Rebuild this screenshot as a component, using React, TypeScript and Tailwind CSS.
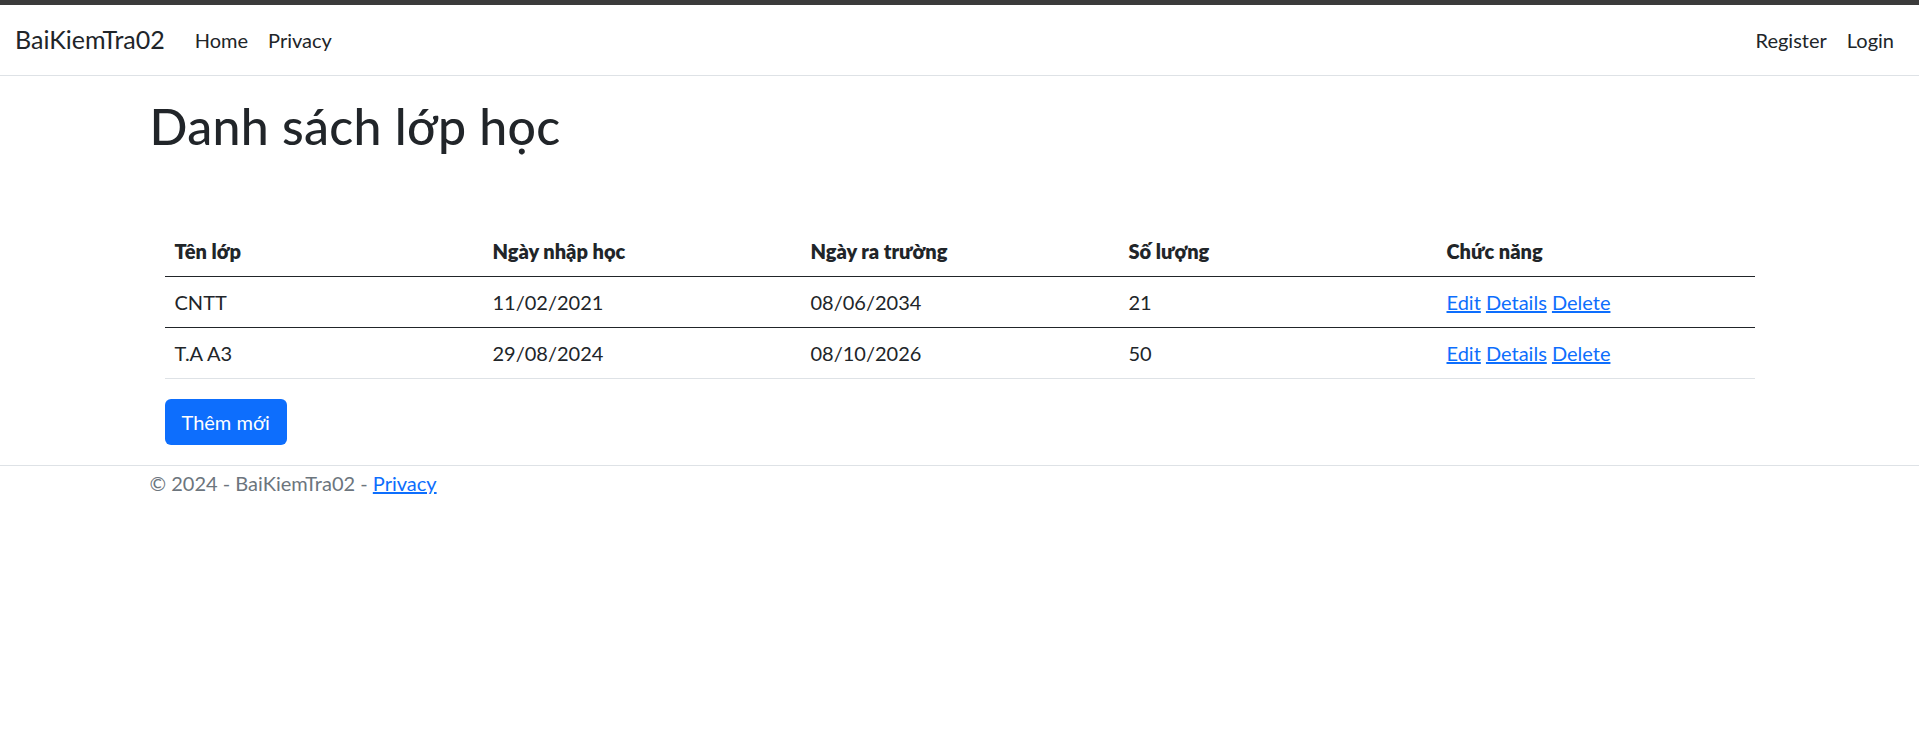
import React from 'react';

const rows = [
  { name: 'CNTT', start: '11/02/2021', end: '08/06/2034', count: 21 },
  { name: 'T.A A3', start: '29/08/2024', end: '08/10/2026', count: 50 },
];

const font = { fontFamily: 'Lato, "Noto Sans", sans-serif' };

const App = () => {
  return (
    <div className="min-h-[739px] bg-white text-[#212529] text-[20px]" style={font}>
      <div className="h-[5px] bg-[#3b3b3b]" />

      <nav className="h-[71px] flex items-center px-[15px] border-b border-[#dee2e6]">
        <a href="#" className="text-[25px] mr-[20px] text-[#212529]">BaiKiemTra02</a>
        <div className="flex flex-1">
          <a href="#" className="px-[10px] text-[#212529]">Home</a>
          <a href="#" className="px-[10px] text-[#212529]">Privacy</a>
        </div>
        <div className="flex">
          <a href="#" className="px-[10px] text-[#212529]">Register</a>
          <a href="#" className="px-[10px] text-[#212529]">Login</a>
        </div>
      </nav>

      <main className="w-[1650px] mx-auto px-[15px]">
        <h1 className="text-[50px] leading-[60px] font-medium tracking-[0.3px] mt-[20px] mb-[70px]">Danh sách lớp học</h1>

        <div className="px-[15px]">
          <table className="w-full table-fixed border-collapse">
            <thead>
              <tr className="border-b border-[#212529] h-[50px]">
                <th className="text-left font-extrabold px-[10px]">Tên lớp</th>
                <th className="text-left font-extrabold px-[10px]">Ngày nhập học</th>
                <th className="text-left font-extrabold px-[10px]">Ngày ra trường</th>
                <th className="text-left font-extrabold px-[10px]">Số lượng</th>
                <th className="text-left font-extrabold px-[10px]">Chức năng</th>
              </tr>
            </thead>
            <tbody>
              {rows.map((r, i) => (
                <tr
                  key={r.name}
                  className={`h-[51px] border-b ${i === 0 ? 'border-[#212529]' : 'border-[#dee2e6]'}`}
                >
                  <td className="px-[10px]">{r.name}</td>
                  <td className="px-[10px]">{r.start}</td>
                  <td className="px-[10px]">{r.end}</td>
                  <td className="px-[10px]">{r.count}</td>
                  <td className="px-[10px]">
                    <a href="#" className="text-[#0d6efd] underline">Edit</a>{' '}
                    <a href="#" className="text-[#0d6efd] underline">Details</a>{' '}
                    <a href="#" className="text-[#0d6efd] underline">Delete</a>
                  </td>
                </tr>
              ))}
            </tbody>
          </table>

          <button className="mt-[20px] h-[46px] px-[17px] bg-[#0d6efd] text-white rounded-[6px]">
            Thêm mới
          </button>
        </div>
      </main>

      <footer className="mt-[20px] border-t border-[#dee2e6]">
        <div className="w-[1650px] mx-auto px-[15px] pt-[2px] text-[#6c757d]">
          © 2024 - BaiKiemTra02 - <a href="#" className="text-[#0d6efd] underline">Privacy</a>
        </div>
      </footer>
    </div>
  );
};

export default App;
